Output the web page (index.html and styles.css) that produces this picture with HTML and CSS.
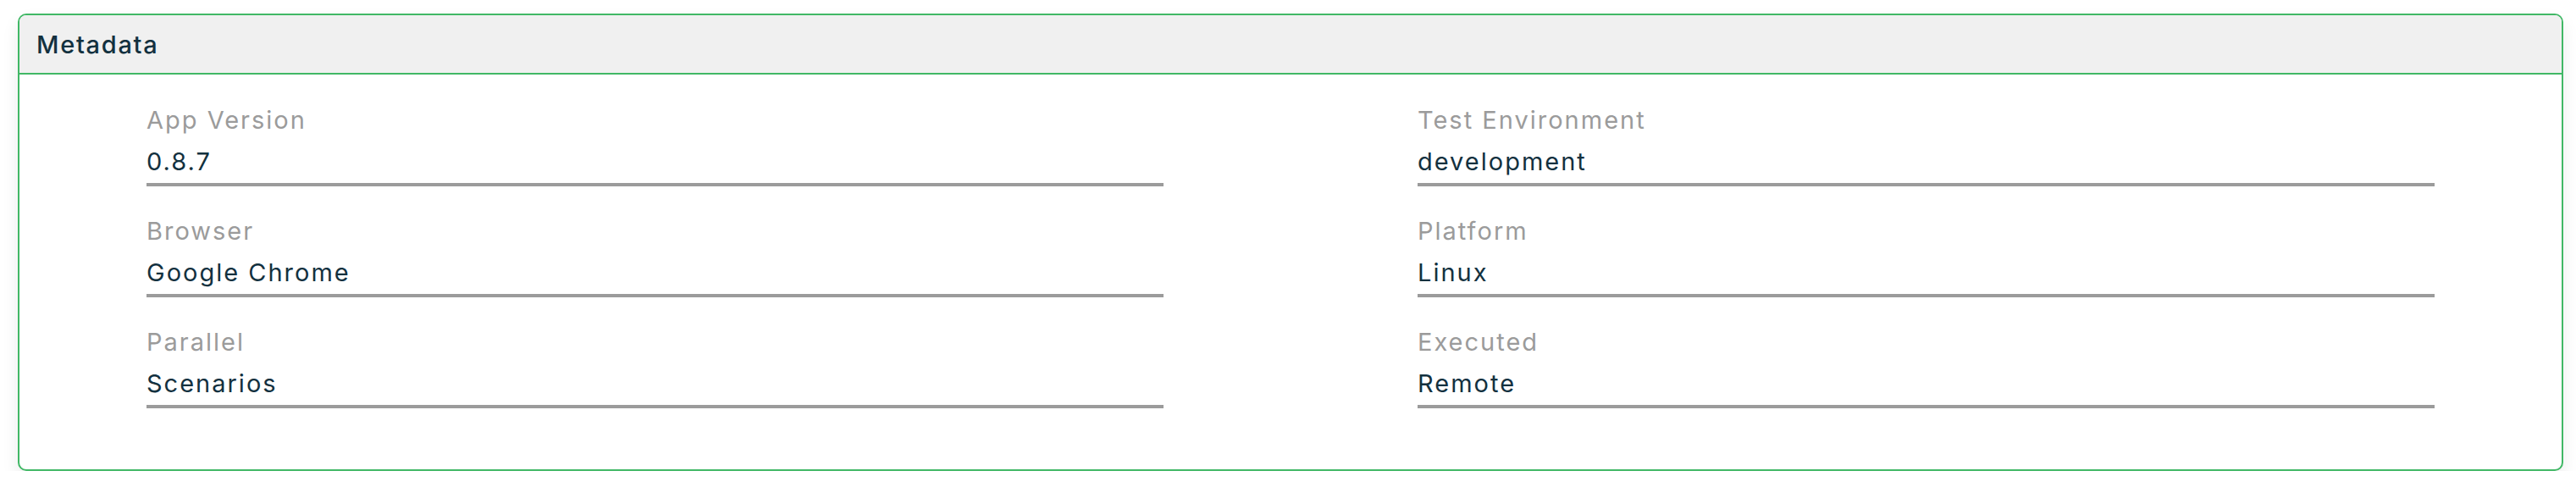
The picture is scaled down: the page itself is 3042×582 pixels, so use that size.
FILE: index.html
```html
<!DOCTYPE html>
<html lang="en">
<head>
<meta charset="utf-8">
<title>Metadata</title>
<link rel="stylesheet" href="styles.css">
</head>
<body>
<div class="page">
  <section class="card">
    <header class="card-header">Metadata</header>
    <div class="card-body">
      <div class="field"><div class="label">App Version</div><div class="value">0.8.7</div></div>
      <div class="field"><div class="label">Test Environment</div><div class="value">development</div></div>
      <div class="field"><div class="label">Browser</div><div class="value">Google Chrome</div></div>
      <div class="field"><div class="label">Platform</div><div class="value">Linux</div></div>
      <div class="field"><div class="label">Parallel</div><div class="value">Scenarios</div></div>
      <div class="field"><div class="label">Executed</div><div class="value">Remote</div></div>
    </div>
  </section>
</div>
</body>
</html>
```
FILE: styles.css
```css
html, body {
  margin: 0;
  padding: 0;
  background: #ffffff;
}
body {
  font-family: "Inter", "Lato", sans-serif;
  color: #13313f;
  letter-spacing: 2px;
}
.page {
  padding: 16px 15px 0 21px;
}
.card {
  border: 2px solid #41b866;
  border-radius: 10px;
  background: #ffffff;
  box-shadow: 0 10px 20px rgba(0, 0, 0, 0.08);
  overflow: hidden;
}
.card-header {
  height: 70px;
  box-sizing: border-box;
  padding: 0 20px;
  display: flex;
  align-items: center;
  background: #f0f0f0;
  border-bottom: 2px solid #41b866;
  font-size: 29px;
  font-weight: 500;
  letter-spacing: 1.7px;
  color: #13313f;
}
.card-body {
  display: grid;
  grid-template-columns: 1fr 1fr;
  row-gap: 29px;
  padding: 30px 0 72px;
}
.field {
  margin: 0 150px;
  border-bottom: 4px solid #9b9b9b;
  padding-bottom: 4px;
}
.label {
  font-size: 29px;
  line-height: 48px;
  color: #9b9b9b;
  margin-bottom: 4px;
}
.value {
  font-size: 29px;
  line-height: 42px;
  color: #13313f;
}
```
